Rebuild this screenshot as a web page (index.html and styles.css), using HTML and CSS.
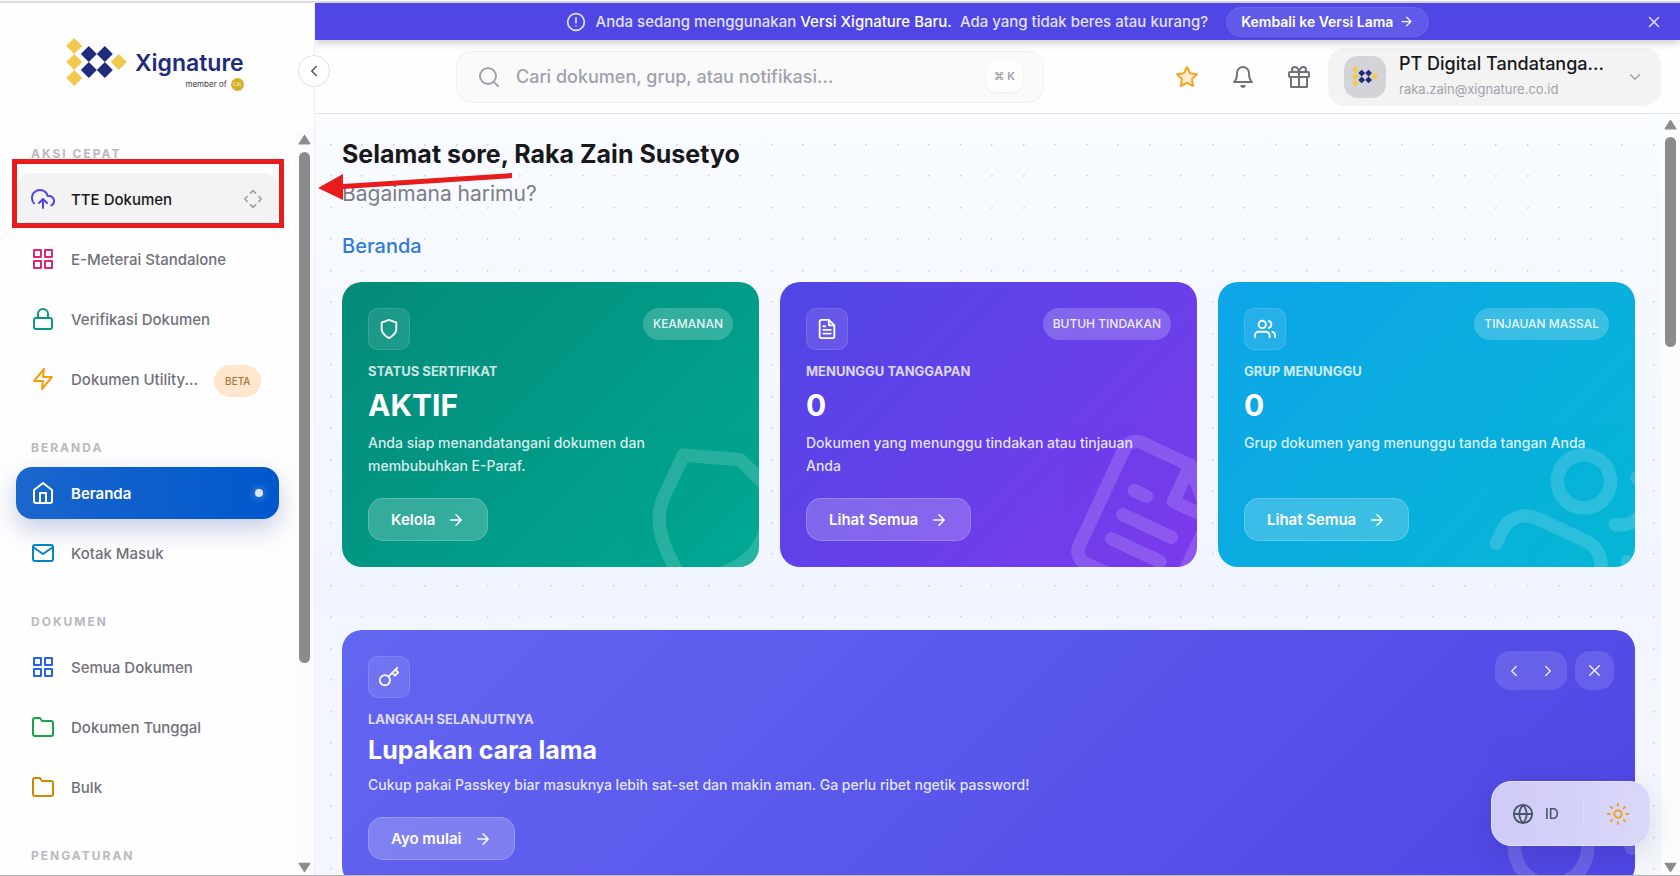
FILE: index.html
```html
<!DOCTYPE html>
<html lang="id">
<head>
    <meta charset="UTF-8">
    <meta name="viewport" content="width=device-width, initial-scale=1.0">
    <title>Beranda - Xignature</title>
    <link rel="stylesheet" href="styles.css">
</head>
<body>
    <!-- Icon sprite -->
    <svg class="sprite" aria-hidden="true">
        <symbol id="i-upload" viewBox="0 0 24 24"><path d="M16 16l-4-4-4 4M12 12v9"/><path d="M20.39 18.39A5 5 0 0 0 18 9h-1.26A8 8 0 1 0 3 16.3"/></symbol>
        <symbol id="i-move" viewBox="0 0 24 24"><path d="M9 5l3-3 3 3M9 19l3 3 3-3M5 9l-3 3 3 3M19 9l3 3-3 3"/></symbol>
        <symbol id="i-grid" viewBox="0 0 24 24"><path d="M3 3h7v7H3zM14 3h7v7h-7zM14 14h7v7h-7zM3 14h7v7H3z"/></symbol>
        <symbol id="i-lock" viewBox="0 0 24 24"><rect x="3" y="11" width="18" height="11" rx="2"/><path d="M7 11V7a5 5 0 0 1 10 0v4"/></symbol>
        <symbol id="i-zap" viewBox="0 0 24 24"><path d="M13 2L3 14h9l-1 8 10-12h-9l1-8z"/></symbol>
        <symbol id="i-home" viewBox="0 0 24 24"><path d="M3 9l9-7 9 7v11a2 2 0 0 1-2 2H5a2 2 0 0 1-2-2z"/><path d="M9 22V12h6v10"/></symbol>
        <symbol id="i-mail" viewBox="0 0 24 24"><rect x="2" y="4" width="20" height="16" rx="2"/><path d="M22 6l-10 7L2 6"/></symbol>
        <symbol id="i-folder" viewBox="0 0 24 24"><path d="M22 19a2 2 0 0 1-2 2H4a2 2 0 0 1-2-2V5a2 2 0 0 1 2-2h5l2 3h9a2 2 0 0 1 2 2z"/></symbol>
        <symbol id="i-alert" viewBox="0 0 24 24"><circle cx="12" cy="12" r="10"/><path d="M12 7v6M12 16.500v.01"/></symbol>
        <symbol id="i-right" viewBox="0 0 24 24"><path d="M5 12h14M12 5l7 7-7 7"/></symbol>
        <symbol id="i-x" viewBox="0 0 24 24"><path d="M18 6L6 18M6 6l12 12"/></symbol>
        <symbol id="i-search" viewBox="0 0 24 24"><circle cx="11" cy="11" r="8"/><path d="M21 21l-4.350-4.350"/></symbol>
        <symbol id="i-star" viewBox="0 0 24 24"><path d="M12 2l3.090 6.260L22 9.270l-5 4.870 1.180 6.880L12 17.770l-6.180 3.250L7 14.140 2 9.270l6.910-1.010z"/></symbol>
        <symbol id="i-bell" viewBox="0 0 24 24"><path d="M18 8A6 6 0 0 0 6 8c0 7-3 9-3 9h18s-3-2-3-9"/><path d="M13.730 21a2 2 0 0 1-3.460 0z"/></symbol>
        <symbol id="i-gift" viewBox="0 0 24 24"><path d="M20 12v10H4V12M12 22V7"/><rect x="2" y="7" width="20" height="5" rx="1"/><path d="M12 7H7.500a2.500 2.500 0 0 1 0-5C11 2 12 7 12 7zM12 7h4.500a2.500 2.500 0 0 0 0-5C13 2 12 7 12 7z"/></symbol>
        <symbol id="i-down" viewBox="0 0 24 24"><path d="M6 9l6 6 6-6"/></symbol>
        <symbol id="i-prev" viewBox="0 0 24 24"><path d="M15 18l-6-6 6-6"/></symbol>
        <symbol id="i-next" viewBox="0 0 24 24"><path d="M9 18l6-6-6-6"/></symbol>
        <symbol id="i-shield" viewBox="0 0 24 24"><path d="M12 22s8-4 8-10V5l-8-3-8 3v7c0 6 8 10 8 10z"/></symbol>
        <symbol id="i-file" viewBox="0 0 24 24"><path d="M14 2H6a2 2 0 0 0-2 2v16a2 2 0 0 0 2 2h12a2 2 0 0 0 2-2V8z"/><path d="M14 2v6h6M16 13H8M16 17H8M10 9H8"/></symbol>
        <symbol id="i-users" viewBox="0 0 24 24"><path d="M17 21v-2a4 4 0 0 0-4-4H5a4 4 0 0 0-4 4v2"/><circle cx="9" cy="7" r="4"/><path d="M23 21v-2a4 4 0 0 0-3-3.870M16 3.130a4 4 0 0 1 0 7.750"/></symbol>
        <symbol id="i-key" viewBox="0 0 24 24"><path d="M21 2l-2 2m-7.610 7.610a5.500 5.500 0 1 1-7.778 7.778 5.500 5.500 0 0 1 7.777-7.777zm0 0L15.500 7.500m0 0l3 3L22 7l-3-3m-3.500 3.500L19 4"/></symbol>
        <symbol id="i-globe" viewBox="0 0 24 24"><circle cx="12" cy="12" r="10"/><path d="M2 12h20M12 2a15.300 15.300 0 0 1 4 10 15.300 15.300 0 0 1-4 10 15.300 15.300 0 0 1-4-10 15.300 15.300 0 0 1 4-10z"/></symbol>
        <symbol id="i-sun" viewBox="0 0 24 24"><circle cx="12" cy="12" r="4"/><path d="M12 1v2M12 21v2M4.220 4.220l1.420 1.420M18.360 18.360l1.420 1.420M1 12h2M21 12h2M4.220 19.780l1.420-1.420M18.360 5.640l1.420-1.420"/></symbol>
        <symbol id="i-logo" viewBox="0 0 182 144">
            <path class="logo-gold" d="M24 0l24 24-24 24L0 24zM24 48l24 24-24 24L0 72zM24 96l24 24-24 24L0 120zM158 48l24 24-24 24-24-24z"/>
            <path class="logo-navy" d="M68 24l24 24-24 24-24-24zM116 24l24 24-24 24-24-24zM68 72l24 24-24 24-24-24zM116 72l24 24-24 24-24-24z"/>
        </symbol>
    </svg>

    <div class="window-edge"></div>

    <div class="app">
        <aside class="sidebar">
            <a href="#" class="brand">
                <svg class="brand-mark"><use href="#i-logo"/></svg>
                <span class="brand-text">
                    <span class="brand-name">Xignature</span>
                    <span class="brand-member">member of <span class="brand-coin">GK</span></span>
                </span>
            </a>
            <button type="button" class="collapse" aria-label="Tutup menu"><svg class="icon"><use href="#i-prev"/></svg></button>

            <div class="sidebar-scroll">
                <nav class="menu">
                    <h2 class="menu-label">Aksi Cepat</h2>
                    <a href="#" class="menu-item hovered">
                        <svg class="icon indigo"><use href="#i-upload"/></svg>
                        <span>TTE Dokumen</span>
                        <svg class="icon move"><use href="#i-move"/></svg>
                    </a>
                    <a href="#" class="menu-item"><svg class="icon pink"><use href="#i-grid"/></svg><span>E-Meterai Standalone</span></a>
                    <a href="#" class="menu-item"><svg class="icon teal"><use href="#i-lock"/></svg><span>Verifikasi Dokumen</span></a>
                    <a href="#" class="menu-item"><svg class="icon amber"><use href="#i-zap"/></svg><span>Dokumen Utility...</span><em class="beta">BETA</em></a>

                    <h2 class="menu-label">Beranda</h2>
                    <a href="#" class="menu-item active"><svg class="icon"><use href="#i-home"/></svg><span>Beranda</span><i class="active-dot"></i></a>
                    <a href="#" class="menu-item"><svg class="icon sky"><use href="#i-mail"/></svg><span>Kotak Masuk</span></a>

                    <h2 class="menu-label">Dokumen</h2>
                    <a href="#" class="menu-item"><svg class="icon blue"><use href="#i-grid"/></svg><span>Semua Dokumen</span></a>
                    <a href="#" class="menu-item"><svg class="icon green"><use href="#i-folder"/></svg><span>Dokumen Tunggal</span></a>
                    <a href="#" class="menu-item"><svg class="icon gold"><use href="#i-folder"/></svg><span>Bulk</span></a>

                    <h2 class="menu-label">Pengaturan</h2>
                </nav>
                <div class="scrollbar">
                    <svg class="scroll-arrow" viewBox="0 0 12 10"><path d="M6 1l5 8H1z"/></svg>
                    <div class="scroll-track"><div class="scroll-thumb menu-thumb"></div></div>
                    <svg class="scroll-arrow" viewBox="0 0 12 10"><path d="M6 9l5-8H1z"/></svg>
                </div>
            </div>
        </aside>

        <div class="main">
            <div class="banner">
                <svg class="icon"><use href="#i-alert"/></svg>
                <p>Anda sedang menggunakan <strong>Versi Xignature Baru.</strong>&nbsp; Ada yang tidak beres atau kurang?</p>
                <button type="button" class="banner-button">Kembali ke Versi Lama <svg class="icon"><use href="#i-right"/></svg></button>
                <button type="button" class="banner-close" aria-label="Tutup"><svg class="icon"><use href="#i-x"/></svg></button>
            </div>

            <header class="topbar">
                <label class="search">
                    <svg class="icon"><use href="#i-search"/></svg>
                    <input type="search" placeholder="Cari dokumen, grup, atau notifikasi..." aria-label="Cari">
                    <kbd>⌘ K</kbd>
                </label>
                <div class="topbar-actions">
                    <button type="button" class="action star" aria-label="Favorit"><svg class="icon"><use href="#i-star"/></svg></button>
                    <button type="button" class="action" aria-label="Notifikasi"><svg class="icon"><use href="#i-bell"/></svg></button>
                    <button type="button" class="action" aria-label="Hadiah"><svg class="icon"><use href="#i-gift"/></svg></button>
                    <button type="button" class="profile">
                        <span class="avatar"><svg><use href="#i-logo"/></svg></span>
                        <span class="profile-text">
                            <span class="profile-name">PT Digital Tandatanga...</span>
                            <span class="profile-mail">raka.zain@xignature.co.id</span>
                        </span>
                        <svg class="icon"><use href="#i-down"/></svg>
                    </button>
                </div>
            </header>

            <div class="content-scroll">
                <main class="content">
                    <h1>Selamat sore, Raka Zain Susetyo</h1>
                    <p class="subtitle">Bagaimana harimu?</p>
                    <h2 class="section-title">Beranda</h2>

                    <div class="cards">
                        <section class="card card-green">
                            <svg class="watermark"><use href="#i-shield"/></svg>
                            <div class="card-head">
                                <span class="card-icon"><svg class="icon"><use href="#i-shield"/></svg></span>
                                <span class="tag">KEAMANAN</span>
                            </div>
                            <h3>Status Sertifikat</h3>
                            <p class="card-value">AKTIF</p>
                            <p class="card-text">Anda siap menandatangani dokumen dan membubuhkan E-Paraf.</p>
                            <button type="button" class="card-button">Kelola <svg class="icon"><use href="#i-right"/></svg></button>
                        </section>
                        <section class="card card-violet">
                            <svg class="watermark"><use href="#i-file"/></svg>
                            <div class="card-head">
                                <span class="card-icon"><svg class="icon"><use href="#i-file"/></svg></span>
                                <span class="tag">BUTUH TINDAKAN</span>
                            </div>
                            <h3>Menunggu Tanggapan</h3>
                            <p class="card-value">0</p>
                            <p class="card-text">Dokumen yang menunggu tindakan atau tinjauan Anda</p>
                            <button type="button" class="card-button">Lihat Semua <svg class="icon"><use href="#i-right"/></svg></button>
                        </section>
                        <section class="card card-cyan">
                            <svg class="watermark"><use href="#i-users"/></svg>
                            <div class="card-head">
                                <span class="card-icon"><svg class="icon"><use href="#i-users"/></svg></span>
                                <span class="tag">TINJAUAN MASSAL</span>
                            </div>
                            <h3>Grup Menunggu</h3>
                            <p class="card-value">0</p>
                            <p class="card-text">Grup dokumen yang menunggu tanda tangan Anda</p>
                            <button type="button" class="card-button">Lihat Semua <svg class="icon"><use href="#i-right"/></svg></button>
                        </section>
                    </div>

                    <section class="card card-indigo">
                        <svg class="watermark"><use href="#i-key"/></svg>
                        <div class="card-head">
                            <span class="card-icon"><svg class="icon"><use href="#i-key"/></svg></span>
                            <div class="slider-controls">
                                <div class="slider-nav">
                                    <button type="button" aria-label="Sebelumnya"><svg class="icon"><use href="#i-prev"/></svg></button>
                                    <button type="button" aria-label="Berikutnya"><svg class="icon"><use href="#i-next"/></svg></button>
                                </div>
                                <button type="button" class="slider-close" aria-label="Tutup"><svg class="icon"><use href="#i-x"/></svg></button>
                            </div>
                        </div>
                        <h3>Langkah Selanjutnya</h3>
                        <p class="card-title">Lupakan cara lama</p>
                        <p class="card-text">Cukup pakai Passkey biar masuknya lebih sat-set dan makin aman. Ga perlu ribet ngetik password!</p>
                        <button type="button" class="card-button">Ayo mulai <svg class="icon"><use href="#i-right"/></svg></button>
                    </section>
                </main>
                <div class="scrollbar">
                    <svg class="scroll-arrow" viewBox="0 0 12 10"><path d="M6 1l5 8H1z"/></svg>
                    <div class="scroll-track"><div class="scroll-thumb content-thumb"></div></div>
                    <svg class="scroll-arrow" viewBox="0 0 12 10"><path d="M6 9l5-8H1z"/></svg>
                </div>
            </div>
        </div>
    </div>

    <div class="preferences">
        <button type="button" class="language"><svg class="icon"><use href="#i-globe"/></svg> ID</button>
        <button type="button" class="theme" aria-label="Mode terang"><svg class="icon"><use href="#i-sun"/></svg></button>
    </div>

    <!-- Tutorial highlight -->
    <div class="highlight-box"></div>
    <svg class="highlight-arrow" viewBox="0 0 196 28"><path d="M0 15L25 1v10L194 0v5L25 16v11z"/></svg>
</body>
</html>
```
FILE: styles.css
```css
* {
    margin: 0;
    padding: 0;
    box-sizing: border-box;
}

body {
    font-family: Inter, "Liberation Sans", sans-serif;
    font-weight: 500;
    color: #18181b;
    background: #fff;
    height: 100vh;
    display: flex;
    flex-direction: column;
    overflow: hidden;
    border-bottom: 1px solid #b5b5b8;
}

a {
    color: inherit;
    text-decoration: none;
}

button {
    font: inherit;
    color: inherit;
    background: none;
    border: 0;
    cursor: pointer;
}

.sprite {
    display: none;
}

.icon {
    width: 24px;
    height: 24px;
    flex: none;
    fill: none;
    stroke: currentColor;
    stroke-width: 2;
    stroke-linecap: round;
    stroke-linejoin: round;
}

.logo-gold {
    fill: #f2c94c;
}

.logo-navy {
    fill: #1f2b7b;
}

.window-edge {
    height: 3px;
    flex: none;
    border-bottom: 2px solid #dddddf;
}

.app {
    flex: 1;
    min-height: 0;
    display: flex;
}

/* Sidebar */
.sidebar {
    position: relative;
    z-index: 2;
    width: 315px;
    flex: none;
    display: flex;
    flex-direction: column;
    background: #fefefe;
    border-right: 1px solid #eceef4;
}

.brand {
    display: flex;
    gap: 8px;
    padding: 35px 0 0 66px;
    height: 126px;
}

.brand-mark {
    width: 61px;
    height: 48px;
}

.brand-text {
    display: flex;
    flex-direction: column;
    align-items: flex-end;
    padding-top: 12px;
}

.brand-name {
    font-size: 23px;
    line-height: 26px;
    font-weight: 600;
    color: #1f2b7b;
}

.brand-member {
    display: flex;
    align-items: center;
    gap: 4px;
    font-size: 8px;
    line-height: 16px;
    font-weight: 400;
    color: #3f3f46;
}

.brand-coin {
    width: 13px;
    height: 13px;
    border-radius: 50%;
    background: #d4af2a;
    color: #fff3c4;
    font: 6px/13px "Liberation Serif", serif;
    text-align: center;
}

.collapse {
    position: absolute;
    top: 52px;
    right: -16px;
    width: 32px;
    height: 32px;
    display: flex;
    align-items: center;
    justify-content: center;
    background: #fff;
    border: 1px solid #e0e0e4;
    border-radius: 50%;
    color: #52525b;
}

.collapse .icon {
    width: 18px;
    height: 18px;
}

.sidebar-scroll {
    flex: 1;
    min-height: 0;
    display: flex;
}

.menu {
    flex: 1;
    display: flex;
    flex-direction: column;
    gap: 8px;
    padding: 17px 16px 0;
    overflow: hidden;
}

.menu-label {
    flex: none;
    padding-left: 15px;
    margin: 27px 0 3px;
    font-size: 12px;
    line-height: 16px;
    font-weight: 700;
    letter-spacing: 2px;
    text-transform: uppercase;
    color: #b9b9c0;
}

.menu-label:first-child {
    margin-top: 0;
}

.menu-item {
    flex: none;
    display: flex;
    align-items: center;
    gap: 16px;
    height: 52px;
    padding: 0 16px 0 15px;
    border-radius: 16px;
    font-size: 15px;
    white-space: nowrap;
    color: #71717a;
}

.menu-item.hovered {
    background: #f3f3f4;
    color: #18181b;
}

.menu-item.active {
    background: linear-gradient(90deg, #1a66cc, #0057cc);
    box-shadow: 0 10px 24px rgba(30, 60, 160, 0.25);
    color: #fff;
    font-weight: 600;
}

.menu-item .move {
    width: 20px;
    height: 20px;
    margin-left: auto;
    color: #a1a1aa;
}

.indigo { color: #4f46e5; }
.pink { color: #db2777; }
.teal { color: #0d9488; }
.amber { color: #f59e0b; }
.sky { color: #0284c7; }
.blue { color: #2563eb; }
.green { color: #16a34a; }
.gold { color: #ca8a04; }

.beta {
    margin: 4px 2px 0 auto;
    padding: 0 11px;
    border-radius: 16px;
    background: #ffe6cc;
    color: #a9743c;
    font-size: 10px;
    line-height: 32px;
    font-style: normal;
}

.active-dot {
    width: 8px;
    height: 8px;
    margin-left: auto;
    border-radius: 50%;
    background: #dbe8fb;
    box-shadow: 0 0 8px rgba(255, 255, 255, 0.5);
}

/* Scrollbars */
.scrollbar {
    width: 19px;
    flex: none;
    display: flex;
    flex-direction: column;
    align-items: center;
    padding: 5px 0 2px;
    background: #fcfcfc;
}

.scroll-arrow {
    width: 13px;
    height: 11px;
    flex: none;
    fill: #8b8b8b;
    stroke: #8b8b8b;
    stroke-linejoin: round;
}

.scroll-track {
    flex: 1;
    padding-top: 7px;
}

.scroll-thumb {
    width: 11px;
    border-radius: 6px;
    background: #8b8b8b;
}

.menu-thumb {
    height: 72%;
}

.content-thumb {
    height: 29%;
}

/* Banner and top bar */
.main {
    flex: 1;
    min-width: 0;
    display: flex;
    flex-direction: column;
}

.banner {
    position: relative;
    z-index: 1;
    flex: none;
    height: 37px;
    display: flex;
    align-items: center;
    justify-content: center;
    background: #4f46e5;
    box-shadow: 0 3px 8px rgba(0, 0, 0, 0.2);
    color: #e2e0fb;
    font-size: 15px;
}

.banner > .icon {
    width: 20px;
    height: 20px;
    margin-right: 10px;
}

.banner strong {
    font-weight: 500;
    color: #fff;
}

.banner-button {
    display: flex;
    align-items: center;
    gap: 6px;
    height: 30px;
    margin-left: 18px;
    padding: 0 14px;
    border: 1px solid #6d66ea;
    border-radius: 15px;
    background: #6159e8;
    color: #fff;
    font-size: 14px;
    font-weight: 600;
}

.banner-button .icon {
    width: 15px;
    height: 15px;
}

.banner-close {
    position: absolute;
    right: 17px;
    display: flex;
}

.banner-close .icon {
    width: 18px;
    height: 18px;
}

.topbar {
    flex: none;
    display: flex;
    align-items: center;
    justify-content: space-between;
    height: 74px;
    padding: 0 19px 0 141px;
    background: #fefefe;
    border-bottom: 1px solid #e1e3e6;
}

.search {
    width: 588px;
    height: 52px;
    display: flex;
    align-items: center;
    gap: 15px;
    padding: 0 20px;
    background: #fafafa;
    border: 1px solid #f0f0f1;
    border-radius: 16px;
    color: #a1a1aa;
}

.search input {
    flex: 1;
    min-width: 0;
    border: 0;
    outline: 0;
    background: none;
    font: inherit;
    font-size: 18px;
}

.search input::placeholder {
    color: #a1a1aa;
    opacity: 1;
}

.search kbd {
    padding: 0 8px;
    border-radius: 10px;
    background: #fdfdfd;
    box-shadow: 0 1px 3px rgba(0, 0, 0, 0.07);
    font: 600 11px/31px Inter, "DejaVu Sans", sans-serif;
}

.topbar-actions {
    display: flex;
    align-items: center;
}

.action {
    display: flex;
    margin-right: 32px;
    color: #71717a;
}

.action:nth-child(3) {
    margin-right: 17px;
}

.star .icon {
    fill: #fdebd0;
    color: #f5a623;
}

.profile {
    width: 333px;
    height: 58px;
    display: flex;
    align-items: center;
    padding: 0 17px 0 16px;
    border-radius: 17px;
    background: #f3f3f4;
    text-align: left;
}

.profile > .icon {
    width: 18px;
    height: 18px;
    margin-left: auto;
    color: #a1a1aa;
}

.avatar {
    width: 42px;
    height: 42px;
    display: flex;
    align-items: center;
    justify-content: center;
    margin-right: 13px;
    border-radius: 14px;
    background: #d4d4d8;
}

.avatar svg {
    width: 26px;
    height: 21px;
}

.profile-text {
    display: flex;
    flex-direction: column;
    padding-bottom: 3px;
}

.profile-name {
    font-size: 18px;
    line-height: 27px;
}

.profile-mail {
    font-size: 13px;
    line-height: 24px;
    font-weight: 400;
    color: #a1a1aa;
}

/* Content */
.content-scroll {
    flex: 1;
    min-height: 0;
    display: flex;
    overflow: hidden;
}

.content {
    --dot: radial-gradient(circle, #d5d9e2 1px, transparent 1px);
    flex: 1;
    min-width: 0;
    padding: 24px 26px 0 27px;
    background:
        var(--dot) -16px -1px / 63px 63px,
        var(--dot) 15px -1px / 63px 63px,
        var(--dot) -16px 30px / 63px 63px,
        var(--dot) 15px 30px / 63px 63px,
        linear-gradient(180deg, #f8fbff, #f1f5ff 60%, #f5f7ff);
}

h1 {
    font-size: 25px;
    line-height: 32px;
    font-weight: 700;
}

.subtitle {
    margin-top: 10px;
    font-size: 21px;
    line-height: 28px;
    font-weight: 400;
    color: #7d7d86;
}

.section-title {
    margin: 24px 0 22px;
    font-size: 20px;
    line-height: 28px;
    font-weight: 500;
    color: #2f7bd9;
}

.cards {
    display: grid;
    grid-template-columns: repeat(3, 1fr);
    gap: 21px;
    margin-bottom: 63px;
}

.card {
    position: relative;
    overflow: hidden;
    display: flex;
    flex-direction: column;
    align-items: flex-start;
    padding: 26px;
    border-radius: 20px;
    color: #fff;
}

.card-green { background: linear-gradient(135deg, #048a78, #00a994); }
.card-violet { background: linear-gradient(135deg, #4f46e5, #7c3aed); }
.card-cyan { background: linear-gradient(135deg, #0ea5e9, #06b6d4); }
.card-indigo { background: linear-gradient(135deg, #6366f1, #4f46e5); }

.watermark {
    position: absolute;
    right: -33px;
    bottom: -33px;
    width: 160px;
    height: 160px;
    transform: rotate(25deg);
    opacity: 0.15;
    fill: none;
    stroke: #fff;
    stroke-width: 2;
    stroke-linecap: round;
    stroke-linejoin: round;
}

.card-head {
    width: 100%;
    display: flex;
    align-items: flex-start;
    justify-content: space-between;
    margin-bottom: 11px;
}

.card-icon {
    width: 42px;
    height: 42px;
    display: flex;
    align-items: center;
    justify-content: center;
    border: 1px solid rgba(255, 255, 255, 0.12);
    border-radius: 10px;
    background: rgba(255, 255, 255, 0.1);
}

.card-icon .icon {
    width: 22px;
    height: 22px;
}

.tag {
    padding: 0 10px;
    border-radius: 16px;
    background: rgba(255, 255, 255, 0.2);
    color: rgba(255, 255, 255, 0.9);
    font-size: 12px;
    line-height: 32px;
}

.card h3 {
    font-size: 13px;
    line-height: 20px;
    font-weight: 700;
    text-transform: uppercase;
    color: rgba(255, 255, 255, 0.8);
}

.card-value {
    margin: 4px 0 6px;
    font-size: 30px;
    line-height: 40px;
    font-weight: 700;
}

.card-title {
    margin: 3px 0 5px;
    font-size: 25px;
    line-height: 36px;
    font-weight: 700;
}

.card-text {
    max-width: 350px;
    margin-bottom: 21px;
    font-size: 14px;
    line-height: 23px;
    color: rgba(255, 255, 255, 0.85);
}

.card-indigo .card-text {
    max-width: none;
}

.card-button {
    position: relative;
    display: flex;
    align-items: center;
    gap: 12px;
    height: 43px;
    margin-top: auto;
    padding: 0 22px;
    border: 1px solid rgba(255, 255, 255, 0.2);
    border-radius: 15px;
    background: rgba(255, 255, 255, 0.2);
    font-size: 15px;
    font-weight: 600;
}

.card-button .icon {
    width: 18px;
    height: 18px;
}

.slider-controls {
    display: flex;
    gap: 8px;
    margin: -5px -5px 0 0;
}

.slider-nav,
.slider-close {
    height: 39px;
    display: flex;
    align-items: center;
    border-radius: 15px;
    background: rgba(255, 255, 255, 0.12);
    color: rgba(255, 255, 255, 0.85);
}

.slider-nav button {
    display: flex;
    padding: 0 10px;
}

.slider-nav .icon {
    width: 18px;
    height: 18px;
}

.slider-nav button:first-child {
    padding-right: 6px;
}

.slider-close {
    padding: 0 10px;
}

.slider-close .icon {
    width: 19px;
    height: 19px;
}

/* Floating language / theme switch */
.preferences {
    position: fixed;
    z-index: 3;
    right: 30px;
    bottom: 30px;
    width: 159px;
    height: 65px;
    display: flex;
    align-items: center;
    justify-content: space-between;
    padding: 0 20px;
    border: 1px solid #e4e2fa;
    border-radius: 20px;
    background: linear-gradient(90deg, #cfcbf8, #d9d7f9);
    box-shadow: 0 8px 30px rgba(0, 0, 0, 0.12);
}

.preferences .icon {
    width: 22px;
    height: 22px;
}

.language {
    display: flex;
    align-items: center;
    gap: 11px;
    height: 24px;
    padding-right: 24px;
    border-right: 1px solid #e0def9;
    color: #475569;
    font-size: 14px;
}

.theme {
    display: flex;
    color: #f59e0b;
}

/* Tutorial highlight */
.highlight-box {
    position: absolute;
    z-index: 4;
    left: 12px;
    top: 159px;
    width: 272px;
    height: 69px;
    border: 5px solid #e81c1c;
}

.highlight-arrow {
    position: absolute;
    z-index: 4;
    left: 318px;
    top: 173px;
    width: 196px;
    height: 28px;
    fill: #e81c1c;
}
```
